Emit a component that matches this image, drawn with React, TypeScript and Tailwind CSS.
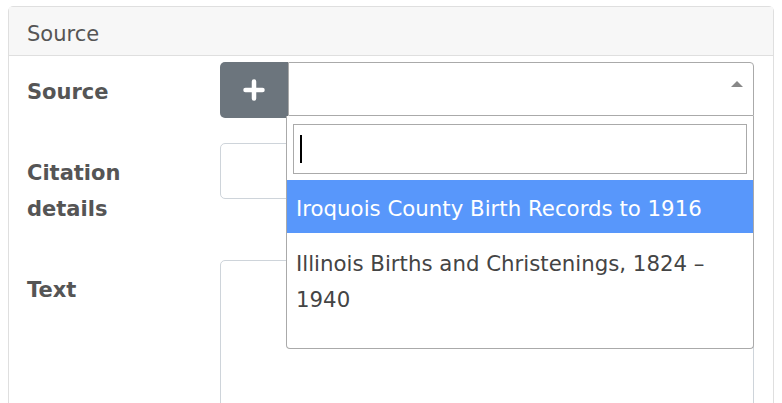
import React from 'react'

const font = "font-['DejaVu_Sans',Verdana,sans-serif]"

function PlusIcon() {
  return (
    <svg width="22" height="22" viewBox="0 0 22 22" fill="none" stroke="white" strokeWidth={4.5} strokeLinecap="round">
      <path d="M11 2.5v17M2.5 11h17" />
    </svg>
  )
}

function SourceSelect() {
  return (
    <div className="relative flex h-[56px]">
      {/* add button */}
      <button
        type="button"
        className="flex w-[68px] h-[56px] items-center justify-center rounded-l-[5px] bg-[#6c757d]"
        aria-label="Add source"
      >
        <PlusIcon />
      </button>

      {/* select2 style box, opened */}
      <div className="flex flex-1 h-[54px] items-start justify-end border border-[#aaa] rounded-tr-[4px] pt-[18px] pr-[10px]">
        <span className="block w-0 h-0 border-x-[6px] border-x-transparent border-b-[6px] border-b-[#888]" />
      </div>

      {/* dropdown */}
      <div className="absolute left-[66px] top-[54px] z-10 w-[468px] bg-white border border-t-0 border-[#aaa] rounded-b-[4px]">
        <div className="pt-[8px] pb-[6px] px-[6px]">
          <div className="flex h-[50px] items-center border border-[#aaa] pl-[6px]">
            <span className="block w-[2px] h-[28px] bg-black" />
          </div>
        </div>
        <ul className="h-[168px] overflow-hidden text-[21.3px] leading-[36px] text-[#444]">
          <li className="h-[53px] pt-[11px] pl-[9px] pr-[7px] bg-[#5897fb] text-white">
            Iroquois County Birth Records to 1916
          </li>
          <li className="pt-[13px] pb-[8px] pl-[9px] pr-[7px]">
            Illinois Births and Christenings, 1824 – 1940
          </li>
        </ul>
      </div>
    </div>
  )
}

export default function App() {
  return (
    <div className={`${font} bg-white h-[403px] overflow-hidden pt-[6px] px-[8px]`}>
      <div className="border border-[#dfdfdf] rounded-t-[5px]">
        <div className="h-[49px] bg-[#f7f7f7] border-b border-[#dfdfdf] pt-[9px] pl-[18px] text-[21px] leading-[36px] text-[#555]">
          Source
        </div>

        <div className="pt-[6px] pl-[18px] pr-[19px] pb-[20px]">
          <div className="grid grid-cols-[193px_1fr] mb-[25px]">
            <label className="pt-[12px] text-[21px] leading-[36px] font-bold text-[#555]">Source</label>
            <SourceSelect />
          </div>

          <div className="grid grid-cols-[193px_1fr] mb-[25px]">
            <label className="pt-[12px] pb-[8px] text-[21px] leading-[36px] font-bold text-[#555]">
              Citation
              <br />
              details
            </label>
            <input className="h-[56px] border border-[#ced4da] rounded-[5px] px-3 outline-none" />
          </div>

          <div className="grid grid-cols-[193px_1fr]">
            <label className="pt-[12px] text-[21px] leading-[36px] font-bold text-[#555]">Text</label>
            <textarea className="h-[170px] border border-[#ced4da] rounded-[5px] px-3 resize-none outline-none" />
          </div>
        </div>
      </div>
    </div>
  )
}
